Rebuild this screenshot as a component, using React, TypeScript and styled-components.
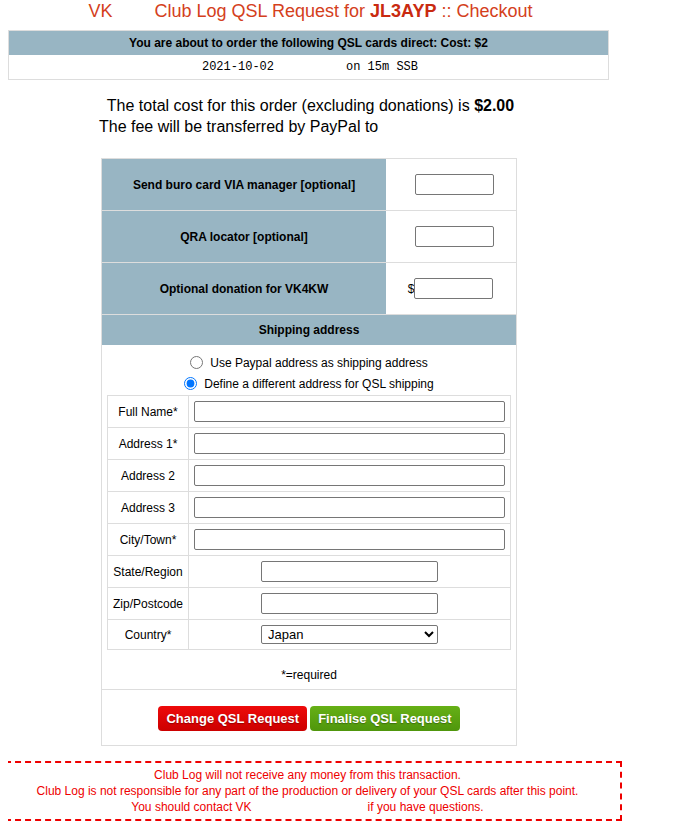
import React from 'react';
import styled, { createGlobalStyle } from 'styled-components';

const GlobalStyle = createGlobalStyle`
  body {
    margin: 0 8px;
    font-family: "Liberation Sans", Arial, sans-serif;
    background: #fff;
    color: #000;
  }
`;

const BLUE = '#98b5c3';
const LINE = '#dddddd';

type Field = {
  label: string;
  wide?: boolean;
  select?: boolean;
};

const fields: Field[] = [
  { label: 'Full Name*', wide: true },
  { label: 'Address 1*', wide: true },
  { label: 'Address 2', wide: true },
  { label: 'Address 3', wide: true },
  { label: 'City/Town*', wide: true },
  { label: 'State/Region' },
  { label: 'Zip/Postcode' },
  { label: 'Country*', select: true },
];

export default function App(): JSX.Element {
  return (
    <Page>
      <GlobalStyle />
      <Title>
        VK<Gap $w={42} />Club Log QSL Request for <b>JL3AYP</b> :: Checkout
      </Title>

      <OrderTable>
        <OrderHead>You are about to order the following QSL cards direct: Cost: $2</OrderHead>
        <OrderRow>{'2021-10-02          on 15m SSB'}</OrderRow>
      </OrderTable>

      <CostLine>
        The total cost for this order (excluding donations) is <b>$2.00</b>
      </CostLine>
      <FeeLine>The fee will be transferred by PayPal to</FeeLine>

      <FormTable>
        <OptionRow>
          <OptionLabel>Send buro card VIA manager [optional]</OptionLabel>
          <OptionCell>
            <SmallInput />
          </OptionCell>
        </OptionRow>
        <OptionRow>
          <OptionLabel>QRA locator [optional]</OptionLabel>
          <OptionCell>
            <SmallInput />
          </OptionCell>
        </OptionRow>
        <OptionRow>
          <OptionLabel>Optional donation for VK4KW</OptionLabel>
          <OptionCell>
            <Dollar>$</Dollar>
            <SmallInput />
          </OptionCell>
        </OptionRow>
        <SectionHead>Shipping address</SectionHead>

        <RadioBlock>
          <RadioLine>
            <Radio type="radio" name="ship" />
            Use Paypal address as shipping address
          </RadioLine>
          <RadioLine>
            <Radio type="radio" name="ship" defaultChecked />
            Define a different address for QSL shipping
          </RadioLine>
        </RadioBlock>

        <AddressTable>
          {fields.map((f) => (
            <AddressRow key={f.label} $short={f.select}>
              <AddressLabel>{f.label}</AddressLabel>
              <AddressCell $wide={f.wide}>
                {f.select ? (
                  <CountrySelect defaultValue="Japan">
                    <option>Japan</option>
                  </CountrySelect>
                ) : (
                  <TextInput $wide={f.wide} />
                )}
              </AddressCell>
            </AddressRow>
          ))}
        </AddressTable>

        <Required>*=required</Required>

        <ButtonBar>
          <ActionButton $tone="red">Change QSL Request</ActionButton>
          <ActionButton $tone="green">Finalise QSL Request</ActionButton>
        </ButtonBar>
      </FormTable>

      <Notice>
        <div>Club Log will not receive any money from this transaction.</div>
        <div>Club Log is not responsible for any part of the production or delivery of your QSL cards after this point.</div>
        <div>
          You should contact VK<Gap $w={116} />if you have questions.
        </div>
      </Notice>
    </Page>
  );
}

const Page = styled.div`
  width: 601px;
  padding-bottom: 8px;
`;

const Gap = styled.span<{ $w: number }>`
  display: inline-block;
  width: ${(p) => p.$w}px;
`;

const Title = styled.div`
  height: 22px;
  line-height: 22px;
  font-size: 18px;
  text-align: center;
  padding-left: 4px;
  color: #d4401c;
  b {
    color: #c92a10;
  }
`;

const OrderTable = styled.div`
  margin-top: 8px;
  border: 1px solid ${LINE};
`;

const OrderHead = styled.div`
  height: 24px;
  line-height: 24px;
  background: ${BLUE};
  font-size: 12px;
  font-weight: bold;
  text-align: center;
`;

const OrderRow = styled.div`
  height: 24px;
  line-height: 24px;
  font-family: "Liberation Mono", "Courier New", monospace;
  font-size: 12px;
  text-align: center;
  white-space: pre;
  padding-left: 3px;
`;

const CostLine = styled.div`
  margin-top: 15px;
  font-size: 16px;
  line-height: 21px;
  text-align: center;
  padding-left: 4px;
`;

const FeeLine = styled.div`
  font-size: 16px;
  line-height: 21px;
  padding-left: 91px;
`;

const FormTable = styled.div`
  width: 414px;
  margin: 21px 0 0 93px;
  border: 1px solid ${LINE};
`;

const OptionRow = styled.div`
  display: grid;
  grid-template-columns: 284px 1fr;
  height: 51px;
  border-bottom: 1px solid ${LINE};
`;

const OptionLabel = styled.div`
  display: flex;
  align-items: center;
  justify-content: center;
  background: ${BLUE};
  font-size: 12px;
  font-weight: bold;
`;

const OptionCell = styled.div`
  display: flex;
  align-items: center;
  justify-content: center;
  padding-left: 6px;
`;

const Dollar = styled.span`
  font-size: 12px;
  margin-left: -7px;
`;

const SmallInput = styled.input`
  box-sizing: border-box;
  width: 79px;
  height: 21px;
  border: 1px solid #767676;
  border-radius: 2px;
`;

const SectionHead = styled.div`
  height: 30px;
  line-height: 30px;
  background: ${BLUE};
  font-size: 12px;
  font-weight: bold;
  text-align: center;
`;

const RadioBlock = styled.div`
  padding: 7px 0 1px;
`;

const RadioLine = styled.label`
  display: flex;
  align-items: center;
  justify-content: center;
  height: 21px;
  font-size: 12px;
`;

const Radio = styled.input`
  width: 13px;
  height: 13px;
  margin: 0 7px 0 0;
  accent-color: #0075ff;
`;

const AddressTable = styled.div`
  margin: 0 5px;
  border: 1px solid ${LINE};
  border-bottom: none;
`;

const AddressRow = styled.div<{ $short?: boolean }>`
  display: grid;
  grid-template-columns: 81px 1fr;
  height: ${(p) => (p.$short ? '29px' : '31px')};
  border-bottom: 1px solid ${LINE};
`;

const AddressLabel = styled.div`
  display: flex;
  align-items: center;
  justify-content: center;
  border-right: 1px solid ${LINE};
  font-size: 12px;
`;

const AddressCell = styled.div<{ $wide?: boolean }>`
  display: flex;
  align-items: center;
  justify-content: center;
  padding: 0 ${(p) => (p.$wide ? '5px' : '0')};
`;

const TextInput = styled.input<{ $wide?: boolean }>`
  box-sizing: border-box;
  width: ${(p) => (p.$wide ? '100%' : '177px')};
  height: 21px;
  border: 1px solid #767676;
  border-radius: 2px;
`;

const CountrySelect = styled.select`
  box-sizing: border-box;
  width: 177px;
  height: 19px;
  font-family: "Liberation Sans", Arial, sans-serif;
  font-size: 13px;
  border: 1px solid #767676;
  border-radius: 2px;
  background: #fff;
  padding: 0 2px;
`;

const Required = styled.div`
  height: 40px;
  padding-top: 18px;
  box-sizing: border-box;
  font-size: 12px;
  line-height: 14px;
  text-align: center;
  border-bottom: 1px solid ${LINE};
`;

const ButtonBar = styled.div`
  display: flex;
  justify-content: center;
  gap: 3px;
  padding: 16px 0 14px;
`;

const ActionButton = styled.button<{ $tone: 'red' | 'green' }>`
  height: 25px;
  padding: 0 8px;
  border: none;
  border-radius: 4px;
  font-family: "Liberation Sans", Arial, sans-serif;
  font-size: 13px;
  font-weight: bold;
  color: #fff;
  text-shadow: 0 1px 1px rgba(0, 0, 0, 0.3);
  background: ${(p) =>
    p.$tone === 'red'
      ? 'linear-gradient(#ee0a0a, #cc0000)'
      : 'linear-gradient(#66b016, #4f960c)'};
`;

const Notice = styled.div`
  width: 625px;
  margin: 15px 0 0 -13px;
  padding: 4px 0;
  border: 2px dashed #ee0000;
  border-left: none;
  color: #ee0000;
  font-size: 12px;
  line-height: 16px;
  text-align: center;
`;
